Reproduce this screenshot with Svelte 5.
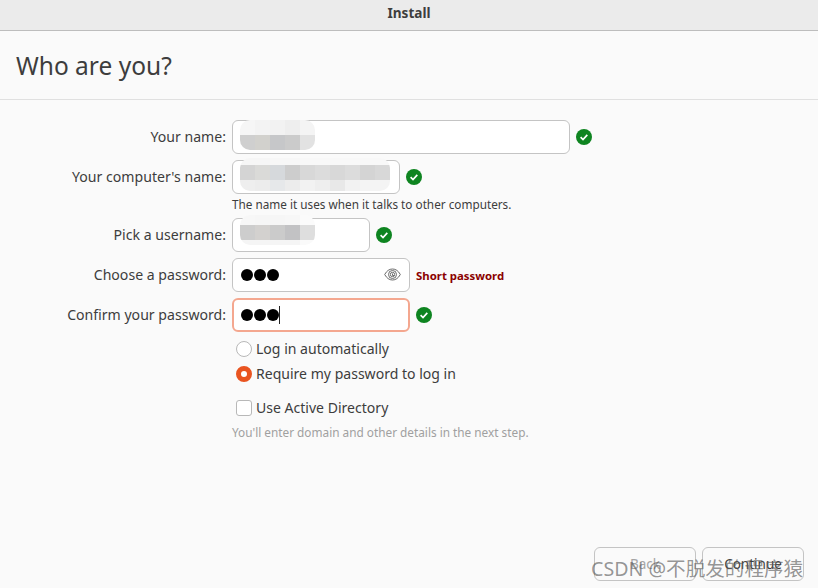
<script>
  const rows = [
    { label: 'Your name:', width: 338, state: 'ok', blur: 'name' },
    { label: "Your computer's name:", width: 168, state: 'ok', blur: 'computer', hint: 'The name it uses when it talks to other computers.' },
    { label: 'Pick a username:', width: 138, state: 'ok', blur: 'user' },
    { label: 'Choose a password:', width: 178, state: 'short', dots: true, eye: true },
    { label: 'Confirm your password:', width: 178, state: 'ok', dots: true, focused: true }
  ];

  // pixelated patches hiding the personal values
  const blurs = {
    name: [
      ['#f6f6f6', '#f3f3f3', '#f2f2f2', '#eeeeee', '#f4f4f4'],
      ['#cfcfcf', '#d2d1cd', '#c6c7c9', '#cbcbcb', '#e2e2e2']
    ],
    computer: [
      ['#f6f6f6', '#f6f6f6', '#f7f7f7', '#f7f7f7', '#f8f8f8', '#f8f8f8', '#f8f8f8', '#f8f8f8', '#f8f8f8', '#f8f8f8'],
      ['#d4d4d4', '#dadad8', '#d6d9dc', '#cdcdcd', '#d8d8d8', '#dcdcdc', '#d8d8d8', '#dcdcdc', '#d4d4d4', '#d8d8d8'],
      ['#eeeeee', '#ececec', '#e6e8ea', '#ececec', '#f2f2f2', '#eeeeee', '#e8e8e8', '#f2f2f2', '#f4f4f4', '#f4f4f4']
    ],
    user: [
      ['#f7f7f7', '#f6f6f6', '#f6f6f6', '#f7f7f7', '#fbfbfb'],
      ['#cdcdcd', '#d3d1cf', '#cbcbcb', '#c2c2c4', '#dedede'],
      ['#f5f5f5', '#f5f5f5', '#f5f5f5', '#f5f5f5', '#fafafa']
    ]
  };
</script>

<div class="window">
  <header class="titlebar">Install</header>

  <div class="heading">
    <h1>Who are you?</h1>
  </div>

  <form class="form">
    {#each rows as row}
      <div class="row">
        <label class="label" for={row.label}>{row.label}</label>
        <div class="field-wrap">
          <div class="input" class:focused={row.focused} style="width: {row.width}px">
            {#if row.dots}
              <span class="dots"><i></i><i></i><i></i></span>
            {/if}
            {#if row.focused}
              <span class="caret"></span>
            {/if}
            {#if row.eye}
              <svg class="eye" width="17" height="13" viewBox="0 0 17 13" fill="none" stroke="#6a6a6a" stroke-width="1">
                <path d="M0.7 6.500C2.700 2.800 5.300 1 8.500 1s5.800 1.800 7.800 5.500c-2 3.700-4.600 5.500-7.800 5.500S2.700 10.200.7 6.500z" />
                <circle cx="8.500" cy="6.500" r="4" />
                <circle cx="8.500" cy="6.500" r="2.200" />
                <path d="M8.500 5.500v2h1.500" />
              </svg>
            {/if}
          </div>
          {#if row.blur}
            <div class="patch {row.blur}">
              {#each blurs[row.blur] as line}
                <div class="patch-row">
                  {#each line as colour}
                    <span style="background: {colour}"></span>
                  {/each}
                </div>
              {/each}
            </div>
          {/if}
          {#if row.state === 'ok'}
            <svg class="check" width="16" height="16" viewBox="0 0 16 16">
              <circle cx="8" cy="8" r="8" fill="#0e8420" />
              <path d="M4.600 8.200l2.400 2.300 4.300-4.600" fill="none" stroke="#fff" stroke-width="1.700" />
            </svg>
          {:else}
            <span class="short">Short password</span>
          {/if}
        </div>
      </div>
      {#if row.hint}
        <p class="hint">{row.hint}</p>
      {/if}
    {/each}

    <div class="options">
      <div class="option">
        <span class="radio"></span>
        <span>Log in automatically</span>
      </div>
      <div class="option">
        <span class="radio on"></span>
        <span>Require my password to log in</span>
      </div>
      <div class="option ad">
        <span class="checkbox"></span>
        <span>Use Active Directory</span>
      </div>
      <p class="note">You'll enter domain and other details in the next step.</p>
    </div>
  </form>

  <footer class="actions">
    <button type="button" class="btn" disabled>Back</button>
    <button type="button" class="btn">Continue</button>
  </footer>

  <div class="watermark">CSDN @不脱发的程序猿</div>
</div>

<style>
  :global(body) {
    margin: 0;
  }

  .window {
    position: relative;
    width: 818px;
    height: 588px;
    display: flex;
    flex-direction: column;
    overflow: hidden;
    background: #fafafa;
    color: #3d3d3d;
    font-family: "Noto Sans", "Noto Sans CJK SC", sans-serif;
    font-size: 14px;
  }

  .titlebar {
    height: 25px;
    padding-bottom: 5px;
    box-sizing: content-box;
    border-bottom: 1px solid #bdbdbd;
    background: #ebebeb;
    display: flex;
    align-items: center;
    justify-content: center;
    font-size: 13.600px;
    font-weight: 700;
    color: #3d3d3d;
  }

  .heading {
    height: 68px;
    border-bottom: 1px solid #e0e0e0;
    display: flex;
    align-items: center;
    padding-left: 16px;
  }

  h1 {
    margin: 0;
    font-size: 24.500px;
    font-weight: 400;
    color: #3d3d3d;
  }

  .form {
    flex: 1;
    padding-top: 20px;
  }

  .row {
    display: flex;
    height: 34px;
    margin-bottom: 6px;
  }

  .label {
    width: 226px;
    text-align: right;
    line-height: 33px;
    flex: none;
    font-size: 14.100px;
  }

  .field-wrap {
    position: relative;
    margin-left: 6px;
    display: flex;
    align-items: center;
    gap: 6px;
  }

  .input {
    box-sizing: border-box;
    height: 34px;
    background: #fff;
    border: 1px solid #c4c4c4;
    border-radius: 6px;
    display: flex;
    align-items: center;
    padding-left: 8px;
    position: relative;
  }

  .input.focused {
    border: 2px solid #f4a78f;
    padding-left: 7px;
  }

  .dots {
    display: flex;
    gap: 1px;
  }

  .dots i {
    width: 12px;
    height: 12px;
    border-radius: 50%;
    background: #000;
  }

  .caret {
    width: 1px;
    height: 18px;
    background: #222;
  }

  .eye {
    position: absolute;
    right: 8px;
    top: 9px;
  }

  .short {
    color: #8b0000;
    font-size: 11.400px;
    font-weight: 700;
  }

  .patch {
    position: absolute;
    left: 8px;
    filter: blur(0.6px);
    border-radius: 10px;
    overflow: hidden;
  }

  .patch.name {
    top: 0;
  }

  .patch.computer {
    top: -2px;
  }

  .patch.user {
    top: -3px;
  }

  .patch-row {
    display: flex;
  }

  .patch-row span {
    width: 15px;
    height: 15px;
  }

  .patch.computer .patch-row:first-child span {
    height: 7px;
  }

  .patch.computer .patch-row:last-child span {
    height: 11px;
  }

  .patch.user .patch-row:first-child span {
    height: 10px;
  }

  .patch.user .patch-row:last-child span {
    height: 5px;
  }

  .hint {
    margin: -5px 0 5px 232px;
    height: 18px;
    line-height: 18px;
    font-size: 11.750px;
  }

  .options {
    margin: -2px 0 0 236px;
  }

  .option {
    display: flex;
    align-items: center;
    gap: 4px;
    height: 25px;
    font-size: 14.050px;
  }

  .option.ad {
    margin-top: 9px;
  }

  .radio {
    box-sizing: border-box;
    width: 16px;
    height: 16px;
    border-radius: 50%;
    background: #fff;
    border: 1px solid #b8b8b8;
  }

  .radio.on {
    border: 5px solid #e95420;
  }

  .checkbox {
    box-sizing: border-box;
    width: 16px;
    height: 16px;
    border-radius: 3px;
    background: #fff;
    border: 1px solid #b8b8b8;
  }

  .note {
    margin: 2px 0 0 -4px;
    height: 20px;
    line-height: 20px;
    color: #a0a0a0;
    font-size: 11.800px;
  }

  .actions {
    position: absolute;
    right: 14px;
    bottom: 7px;
    display: flex;
    gap: 6px;
  }

  .btn {
    box-sizing: border-box;
    width: 102px;
    height: 34px;
    border: 1px solid #c4c4c4;
    border-radius: 6px;
    background: #fafafa;
    color: #3d3d3d;
    font: inherit;
    font-size: 13.500px;
    padding: 0;
  }

  .btn:disabled {
    color: #a5a5a5;
  }

  .watermark {
    position: absolute;
    left: 591px;
    top: 555px;
    color: rgba(90, 90, 90, 0.65);
    font-size: 19.600px;
    line-height: 28px;
    white-space: nowrap;
    pointer-events: none;
  }
</style>
